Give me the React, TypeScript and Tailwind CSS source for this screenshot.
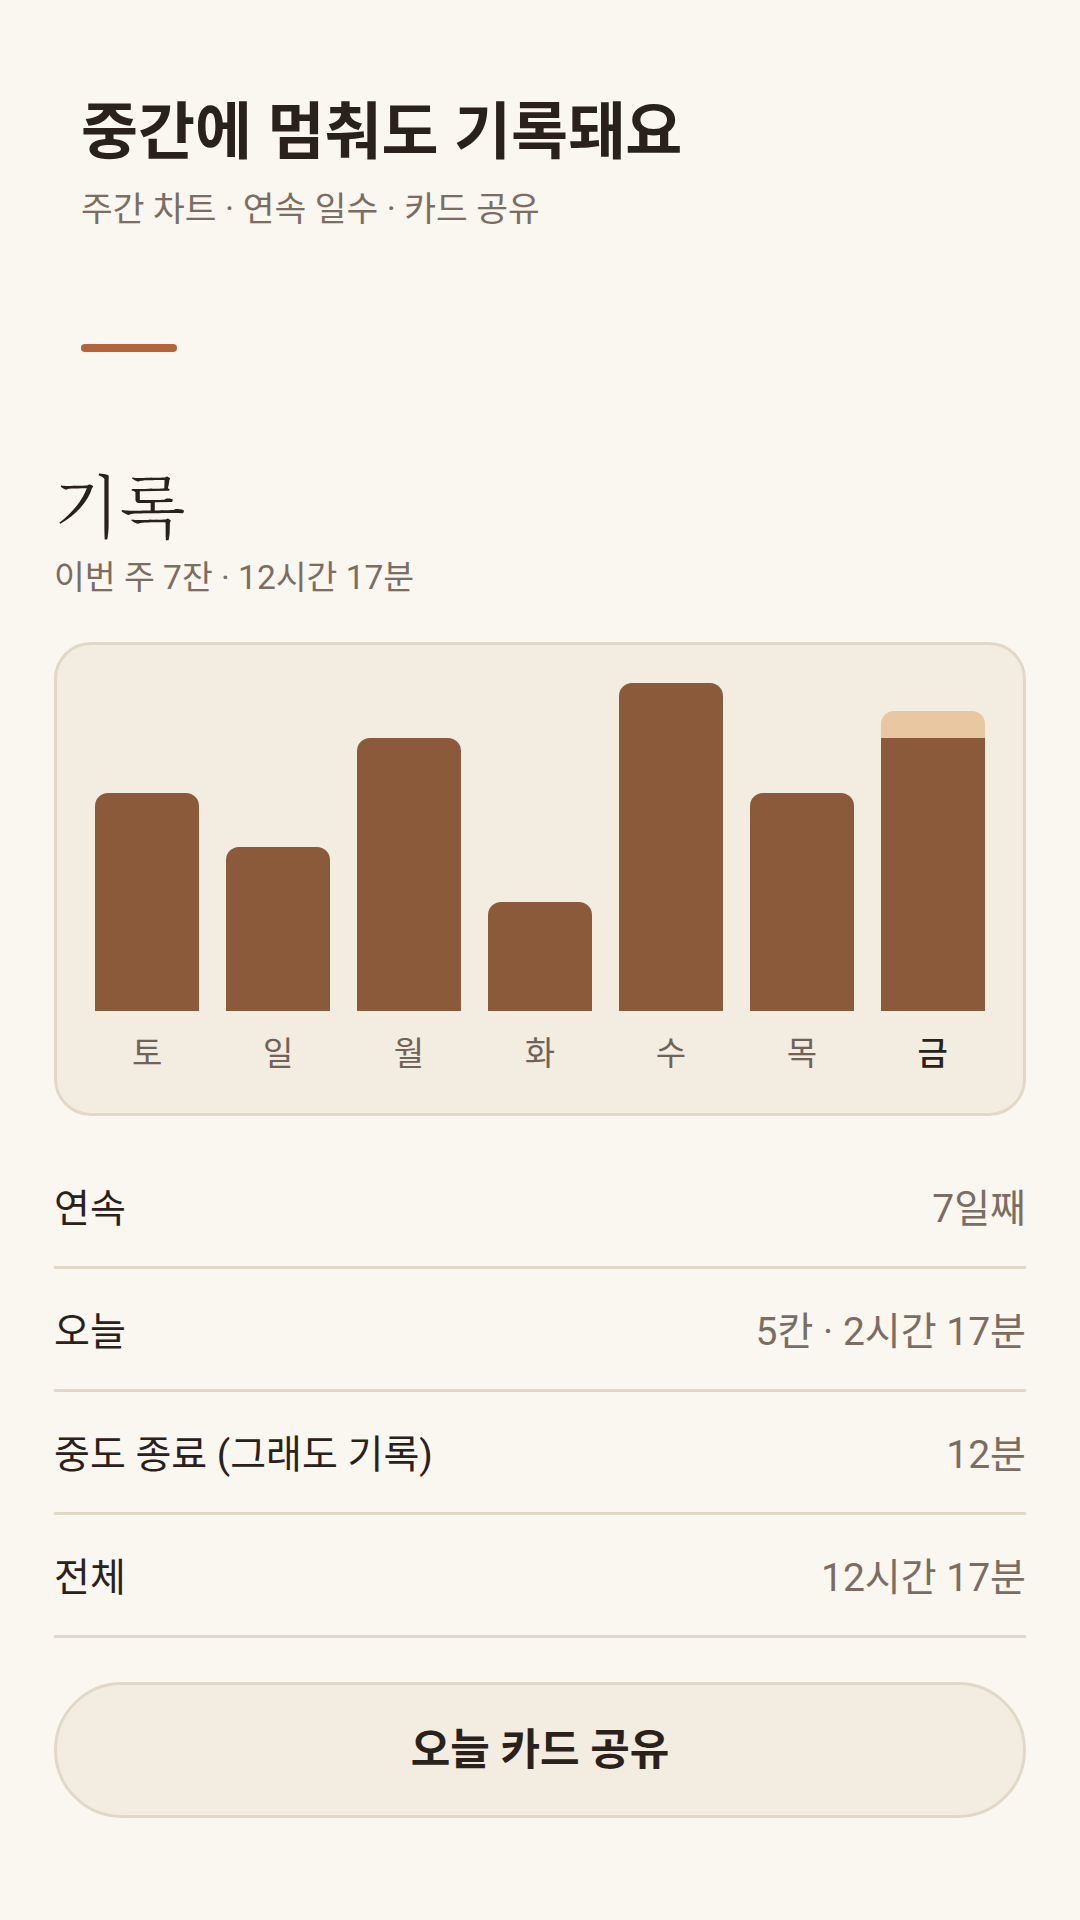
import React from "react";

const days = [
  { label: "토", value: 8, partial: 0 },
  { label: "일", value: 6, partial: 0 },
  { label: "월", value: 10, partial: 0 },
  { label: "화", value: 4, partial: 0 },
  { label: "수", value: 12, partial: 0 },
  { label: "목", value: 8, partial: 0 },
  { label: "금", value: 10, partial: 1, today: true },
];

const rows = [
  { label: "연속", value: "7일째" },
  { label: "오늘", value: "5칸 · 2시간 17분" },
  { label: "중도 종료 (그래도 기록)", value: "12분" },
  { label: "전체", value: "12시간 17분" },
];

const MAX = 12;

export default function App() {
  return (
    <div
      className="min-h-[1920px] w-[1080px] bg-[#faf6f0] px-[54px] text-[#2a211b]"
      style={{ fontFamily: 'Roboto, "Noto Sans CJK KR", "Noto Sans", sans-serif' }}
    >
      <header className="px-[27px] pt-[96px]">
        <h1 className="text-[62px] font-bold leading-[1.2] text-[#2a211b]">
          중간에 멈춰도 기록돼요
        </h1>
        <p className="mt-[15px] text-[34.5px] leading-[1.4] text-[#7b6d62]">
          주간 차트 · 연속 일수 · 카드 공유
        </p>
      </header>

      <div className="ml-[27px] mt-[110px] h-[8px] w-[96px] rounded-full bg-[#b3643f]" />

      <h2
        className="mt-[110px] text-[68px] font-light leading-[1.2] text-[#2a211b]"
        style={{ fontFamily: '"Noto Serif CJK KR", "Noto Serif KR", "Noto Sans CJK KR", serif' }}
      >
        기록
      </h2>
      <p className="mt-[12px] text-[33.5px] leading-[1.4] text-[#7b6d62]">
        이번 주 7잔 · 12시간 17분
      </p>

      <section className="mt-[40px] rounded-[37px] border-[3px] border-[#e2d8c8] bg-[#f3ece1] p-[38px]">
        <div className="flex h-[328px] items-end gap-[26.5px]">
          {days.map((d) => (
            <div
              key={d.label}
              className="flex flex-1 flex-col"
              style={{ height: `${((d.value + d.partial) / MAX) * 100}%` }}
            >
              {d.partial > 0 && (
                <div
                  className="rounded-t-[13px] bg-[#e8c8a0]"
                  style={{ height: `${(d.partial / (d.value + d.partial)) * 100}%` }}
                />
              )}
              <div
                className={`flex-1 bg-[#8b5a3a] ${d.partial > 0 ? "" : "rounded-t-[13px]"}`}
              />
            </div>
          ))}
        </div>
        <div className="mt-[22px] flex gap-[26.5px]">
          {days.map((d) => (
            <div
              key={d.label}
              className={`flex-1 text-center text-[33px] leading-[42px] ${
                d.today ? "font-medium text-[#2a211b]" : "text-[#6f6258]"
              }`}
            >
              {d.label}
            </div>
          ))}
        </div>
      </section>

      <div className="mt-[30px]">
        {rows.map((r) => (
          <div
            key={r.label}
            className="flex h-[123px] items-center justify-between border-b-[3px] border-[#e2d8c8] pt-[6px]"
          >
            <span className="text-[39px] text-[#2a211b]">{r.label}</span>
            <span className="text-[39px] text-[#7b6d62]">{r.value}</span>
          </div>
        ))}
      </div>

      <button className="mt-[44px] flex h-[136px] w-full items-center justify-center rounded-full border-[3px] border-[#e2d8c8] bg-[#f3ece1] text-[43px] font-bold text-[#2a211b]">
        오늘 카드 공유
      </button>
    </div>
  );
}
